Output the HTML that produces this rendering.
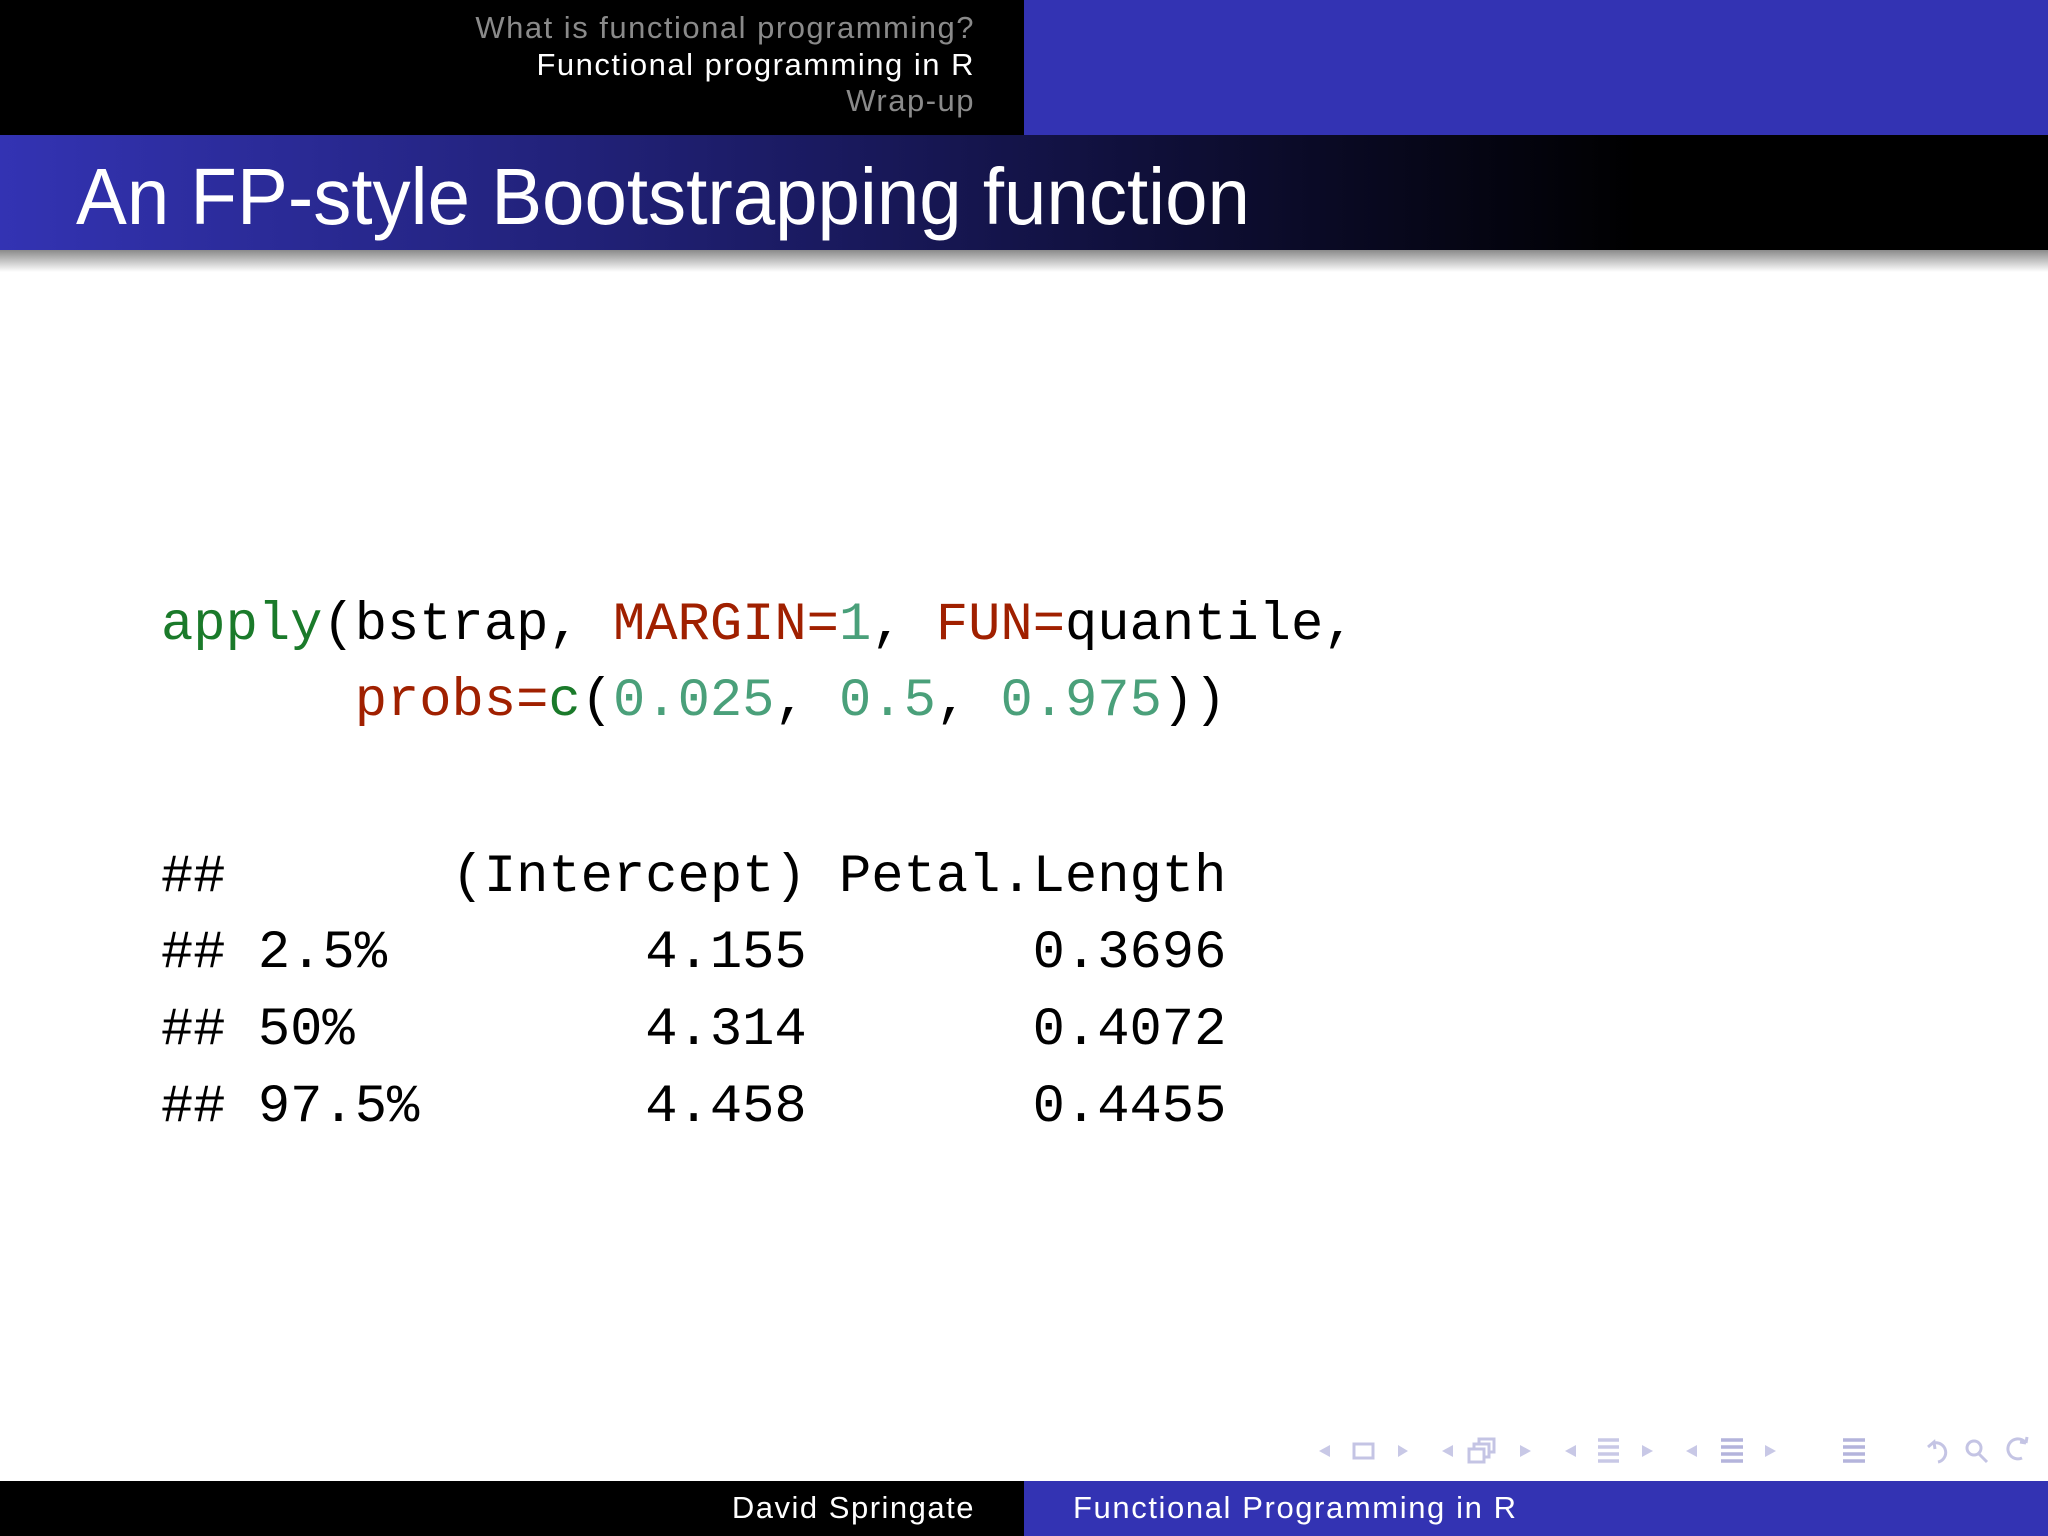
<!DOCTYPE html>
<html><head><meta charset="utf-8"><style>
body{margin:0;width:2048px;height:1536px;position:relative;overflow:hidden;background:#fff;font-family:"Liberation Sans",sans-serif}
.a{position:absolute}
.nav{right:1073px;text-align:right;font-size:31px;line-height:31px;white-space:nowrap;letter-spacing:1.5px}
.code{position:absolute;left:161px;font-family:"Liberation Mono",monospace;font-size:53.8px;line-height:53px;white-space:pre;color:#000}
.g{color:#1a7a2a}.r{color:#a02000}.n{color:#4aa07a}
</style></head><body>
<div class="a" style="left:0;top:0;width:1024px;height:135px;background:#000"></div>
<div class="a" style="left:1024px;top:0;width:1024px;height:135px;background:#3333b3"></div>
<div class="a nav" style="top:12px;color:#8a8a8a">What is functional programming?</div>
<div class="a nav" style="top:49px;color:#fff">Functional programming in R</div>
<div class="a nav" style="top:85px;color:#8a8a8a">Wrap-up</div>
<div class="a" style="left:0;top:135px;width:2048px;height:115px;background:linear-gradient(90deg,#3333b3 0%,#1a1a60 40%,#000 80%)"></div>
<div class="a" style="left:0;top:250px;width:2048px;height:22px;background:linear-gradient(#8a8a8a,#fff)"></div>
<div class="a" style="left:76px;top:152px;font-size:80px;line-height:90px;color:#fff;white-space:nowrap;transform:scaleX(0.953);transform-origin:left">An FP-style Bootstrapping function</div>

<div class="code" style="top:599px"><span class="g">apply</span>(bstrap, <span class="r">MARGIN=</span><span class="n">1</span>, <span class="r">FUN=</span>quantile,</div>
<div class="code" style="top:675px">      <span class="r">probs=</span><span class="g">c</span>(<span class="n">0.025</span>, <span class="n">0.5</span>, <span class="n">0.975</span>))</div>
<div class="code" style="top:851px">##       (Intercept) Petal.Length</div>
<div class="code" style="top:927px">## 2.5%        4.155       0.3696</div>
<div class="code" style="top:1004px">## 50%         4.314       0.4072</div>
<div class="code" style="top:1081px">## 97.5%       4.458       0.4455</div>

<svg class="a" style="left:0;top:1430px" width="2048" height="44" viewBox="0 1430 2048 44" fill="none" stroke="#c4c4e4" stroke-width="3">
<g fill="#c8c8e6" stroke="none">
<path d="M1330 1445l-11 6 11 6z"/><path d="M1398 1445l10 6-10 6z"/>
<path d="M1453 1445l-11 6 11 6z"/><path d="M1520 1445l11 6-11 6z"/>
<path d="M1576 1445l-11 6 11 6z"/><path d="M1642 1445l11 6-11 6z"/>
<path d="M1697 1445l-11 6 11 6z"/><path d="M1765 1445l11 6-11 6z"/>
</g>
<rect x="1354" y="1444" width="19" height="14"/>
<rect x="1469" y="1449" width="15" height="13"/><path d="M1474 1449v-5h15v13h-5M1479 1444v-5h15v13h-5"/>
<g stroke="#c8c8e6" stroke-width="3.5"><path d="M1598 1440h21M1598 1447h21M1598 1454h21M1598 1461h21"/></g>
<g stroke="#b4b4dc" stroke-width="3.5"><path d="M1721 1440h22M1721 1447h22M1721 1454h22M1721 1461h22"/>
<path d="M1843 1440h22M1843 1447h22M1843 1454h22M1843 1461h22"/></g>
<path d="M1934 1443a9 9 0 1 1 4 19M1928 1447l6-5 1 7"/>
<circle cx="1974" cy="1448" r="7"/><path d="M1979 1454l8 8"/>
<path d="M2022 1458a10 10 0 1 1 4-15M2026 1443l1-6M2026 1443l-6-1"/>
</svg>

<div class="a" style="left:0;top:1481px;width:1024px;height:55px;background:#000"></div>
<div class="a" style="left:1024px;top:1481px;width:1024px;height:55px;background:#3333b3"></div>
<div class="a nav" style="top:1492px;color:#fff">David Springate</div>
<div class="a" style="left:1073px;top:1492px;font-size:31px;line-height:31px;color:#fff;white-space:nowrap;letter-spacing:1.6px">Functional Programming in R</div>
</body></html>
